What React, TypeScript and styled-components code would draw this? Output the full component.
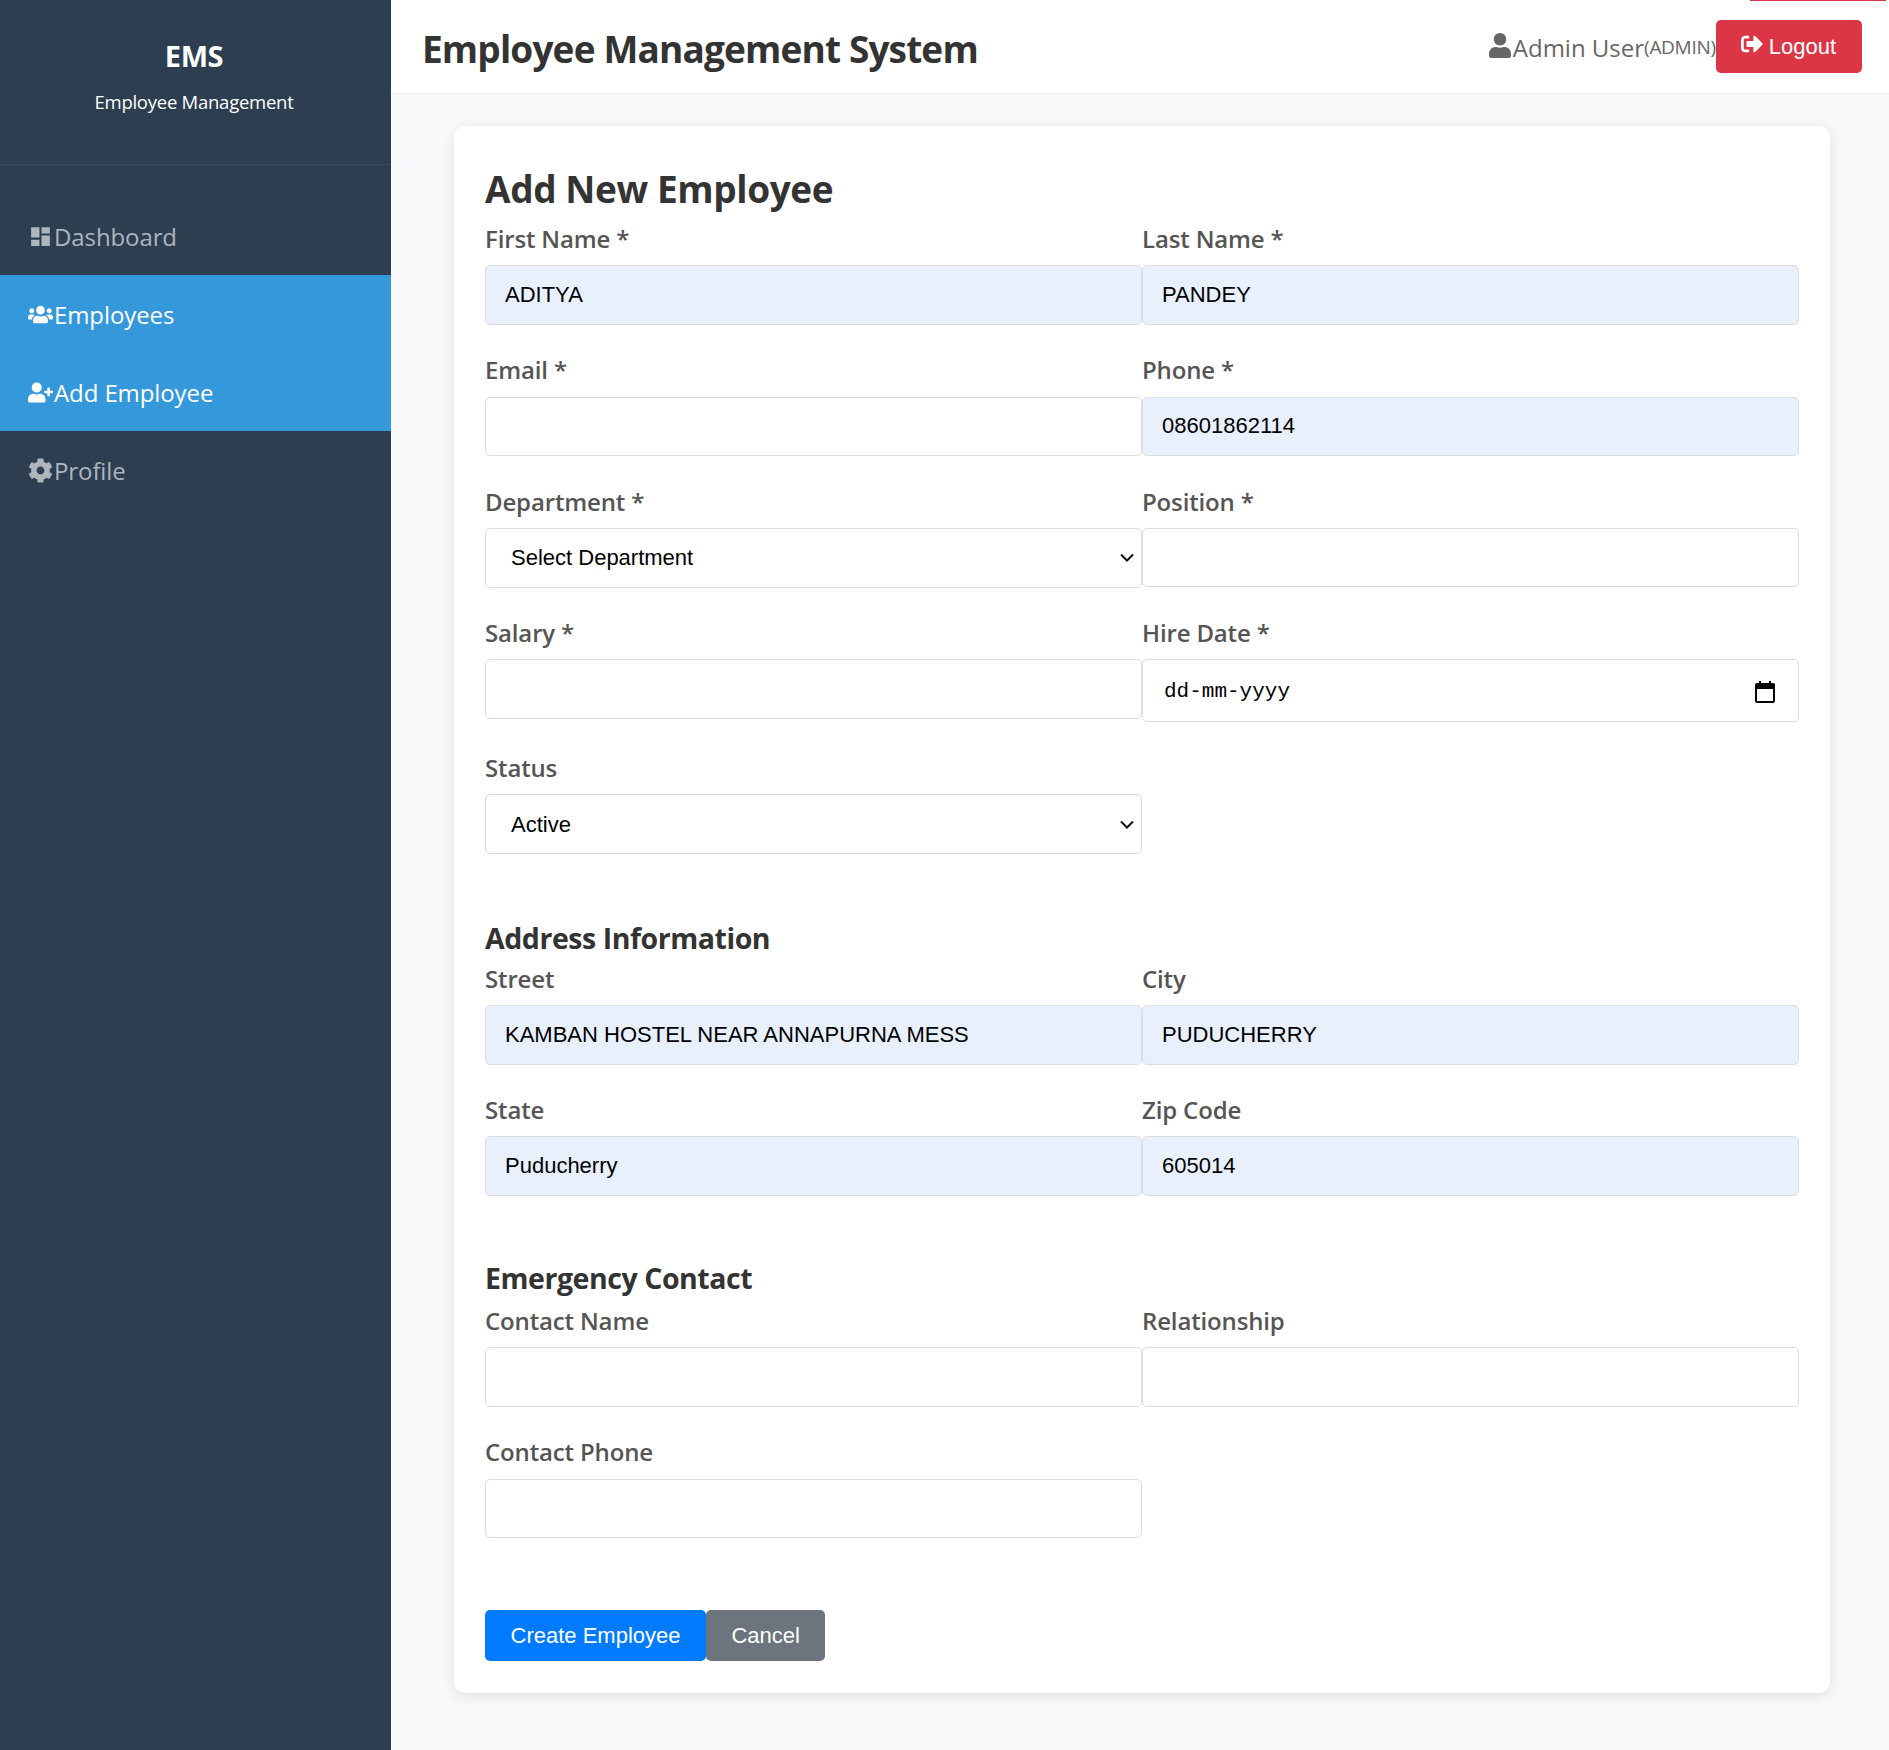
import styled, { createGlobalStyle } from 'styled-components';
import { FaCog, FaSignOutAlt, FaUser, FaUserPlus, FaUsers } from 'react-icons/fa';
import { MdDashboard } from 'react-icons/md';

const chevron =
  "data:image/svg+xml,%3Csvg xmlns='http://www.w3.org/2000/svg' width='14' height='9' viewBox='0 0 14 9'%3E%3Cpath d='M1 1.5l6 6 6-6' fill='none' stroke='%23111' stroke-width='2'/%3E%3C/svg%3E";

const GlobalStyle = createGlobalStyle`
  * {
    box-sizing: border-box;
  }
  body {
    margin: 0;
    background: #f8f9fa;
    font-family: 'Open Sans', 'Liberation Sans', sans-serif;
  }
`;

const Shell = styled.div`
  display: flex;
  min-height: 1750px;
`;

const Sidebar = styled.aside`
  width: 391px;
  flex-shrink: 0;
  background: #2c3e50;
  color: #fff;
`;

const Brand = styled.div`
  height: 165px;
  padding: 36px 3px 0 0;
  text-align: center;
  border-bottom: 1px solid #34495e;
`;

const BrandTitle = styled.h2`
  margin: 0;
  font-size: 29px;
  line-height: 40px;
  font-weight: 700;
  letter-spacing: -0.4px;
`;

const BrandSub = styled.p`
  margin: 11px 0 0;
  font-size: 18.5px;
  line-height: 30px;
  letter-spacing: -0.25px;
`;

const Nav = styled.nav`
  padding-top: 32px;
`;

const NavItem = styled.a<{ $active?: boolean }>`
  display: flex;
  align-items: center;
  gap: 1px;
  height: 78px;
  padding-left: 27px;
  font-size: 24px;
  letter-spacing: -0.1px;
  color: ${(p) => (p.$active ? '#fff' : '#adb5bd')};
  background: ${(p) => (p.$active ? '#3498db' : 'transparent')};
`;

const NavIcon = styled.span`
  display: flex;
  align-items: center;
  justify-content: center;
  width: 26px;
  font-size: 25px;
`;

const Main = styled.div`
  flex: 1;
  min-width: 0;
`;

const Header = styled.header`
  position: relative;
  display: flex;
  align-items: center;
  justify-content: space-between;
  height: 94px;
  padding: 0 27px 0 31px;
  background: #fff;
  border-bottom: 1px solid #e9ecef;

  &::after {
    content: '';
    position: absolute;
    top: 0;
    right: 3px;
    width: 136px;
    height: 1px;
    background: #dc3545;
  }
`;

const PageTitle = styled.h1`
  margin: 4px 0 0;
  font-size: 37px;
  font-weight: 700;
  color: #333;
  letter-spacing: -0.85px;
`;

const UserArea = styled.div`
  display: flex;
  align-items: center;
  color: #666;
`;

const UserName = styled.span`
  display: flex;
  align-items: center;
  font-size: 24px;
  letter-spacing: 0;
  gap: 1px;
  padding-top: 1px;
`;

const UserIcon = styled(FaUser)`
  width: 24px;
  height: 25px;
  margin-bottom: 3px;
`;

const UserRole = styled.span`
  font-size: 19px;
  letter-spacing: -0.3px;
`;

const LogoutButton = styled.button`
  display: flex;
  align-items: center;
  gap: 6px;
  height: 53px;
  padding: 0 26px 0 25px;
  border: none;
  border-radius: 5px;
  background: #dc3545;
  color: #fff;
  font-family: 'Liberation Sans', sans-serif;
  font-size: 22px;
`;

const LogoutIcon = styled(FaSignOutAlt)`
  width: 22px;
  height: 22px;
  margin-bottom: 5px;
`;

const Content = styled.main`
  padding: 32px 59px 57px 63px;
`;

const Card = styled.section`
  padding: 38px 31px 32px;
  background: #fff;
  border-radius: 11px;
  box-shadow: 0 3px 14px rgba(0, 0, 0, 0.1);
`;

const CardTitle = styled.h2`
  margin: 0 0 7px;
  font-size: 37px;
  line-height: 50px;
  font-weight: 700;
  color: #333;
  letter-spacing: -0.4px;
`;

const SectionTitle = styled.h3<{ $top: number; $bottom: number }>`
  margin: ${(p) => `${p.$top}px 0 ${p.$bottom}px`};
  font-size: 28.5px;
  line-height: 40px;
  font-weight: 700;
  color: #333;
  letter-spacing: -0.45px;
`;

const FormGrid = styled.div`
  display: grid;
  grid-template-columns: 1fr 1fr;
`;

const Field = styled.div`
  margin-bottom: 27.5px;
`;

const Label = styled.label`
  display: block;
  margin-bottom: 9.4px;
  font-size: 24px;
  line-height: 35px;
  font-weight: 550;
  color: #555;
  letter-spacing: -0.15px;
`;

const Input = styled.input<{ $filled?: boolean }>`
  display: block;
  width: 100%;
  height: 59.4px;
  padding: 0 19px;
  border: 1px solid #ddd;
  border-radius: 5px;
  background: ${(p) => (p.$filled ? '#e8f0fe' : '#fff')};
  font-family: 'Liberation Sans', sans-serif;
  font-size: 22px;
  color: #000;
`;

const Select = styled.select`
  display: block;
  width: 100%;
  height: 59.6px;
  padding: 0 25px;
  border: 1px solid #ddd;
  border-radius: 5px;
  appearance: none;
  background: #fff url("${chevron}") no-repeat right 7px center;
  font-family: 'Liberation Sans', sans-serif;
  font-size: 22px;
  color: #000;
`;

const DateBox = styled.div`
  display: flex;
  align-items: center;
  justify-content: space-between;
  height: 63px;
  padding: 2px 23px 0 21px;
  border: 1px solid #ddd;
  border-radius: 5px;
  font-family: 'Liberation Mono', monospace;
  font-size: 21px;
  color: #000;
`;

const Actions = styled.div`
  display: flex;
  margin-top: 44.5px;
`;

const ActionButton = styled.button<{ $color: string }>`
  height: 51px;
  padding: 0 25.5px;
  border: none;
  border-radius: 5px;
  background: ${(p) => p.$color};
  color: #fff;
  font-family: 'Liberation Sans', sans-serif;
  font-size: 22px;
`;

type FieldDef = { label: string; value?: string };

function TextField({ label, value }: FieldDef) {
  return (
    <Field>
      <Label>{label}</Label>
      <Input $filled={!!value} defaultValue={value} readOnly />
    </Field>
  );
}

function SelectField({ label, value }: { label: string; value: string }) {
  return (
    <Field>
      <Label>{label}</Label>
      <Select defaultValue={value}>
        <option>{value}</option>
      </Select>
    </Field>
  );
}

const navItems = [
  { label: 'Dashboard', icon: <MdDashboard /> },
  { label: 'Employees', icon: <FaUsers />, active: true },
  { label: 'Add Employee', icon: <FaUserPlus />, active: true },
  { label: 'Profile', icon: <FaCog /> },
];

export default function App() {
  return (
    <Shell>
      <GlobalStyle />
      <Sidebar>
        <Brand>
          <BrandTitle>EMS</BrandTitle>
          <BrandSub>Employee Management</BrandSub>
        </Brand>
        <Nav>
          {navItems.map((item) => (
            <NavItem key={item.label} $active={item.active}>
              <NavIcon>{item.icon}</NavIcon>
              {item.label}
            </NavItem>
          ))}
        </Nav>
      </Sidebar>
      <Main>
        <Header>
          <PageTitle>Employee Management System</PageTitle>
          <UserArea>
            <UserName>
              <UserIcon />
              Admin User
            </UserName>
            <UserRole>(ADMIN)</UserRole>
            <LogoutButton>
              <LogoutIcon />
              Logout
            </LogoutButton>
          </UserArea>
        </Header>
        <Content>
          <Card>
            <CardTitle>Add New Employee</CardTitle>
            <FormGrid>
              <TextField label="First Name *" value="ADITYA" />
              <TextField label="Last Name *" value="PANDEY" />
              <TextField label="Email *" />
              <TextField label="Phone *" value="08601862114" />
              <SelectField label="Department *" value="Select Department" />
              <TextField label="Position *" />
              <TextField label="Salary *" />
              <Field>
                <Label>Hire Date *</Label>
                <DateBox>
                  dd-mm-yyyy
                  <svg width="20" height="22" viewBox="0 0 20 22" fill="none">
                    <rect x="1" y="3" width="18" height="18" stroke="#000" strokeWidth="2" rx="1" />
                    <rect x="1" y="3" width="18" height="5" fill="#000" />
                    <rect x="4" y="0" width="2" height="4" fill="#000" />
                    <rect x="14" y="0" width="2" height="4" fill="#000" />
                  </svg>
                </DateBox>
              </Field>
              <SelectField label="Status" value="Active" />
            </FormGrid>
            <SectionTitle $top={36.2} $bottom={3.2}>Address Information</SectionTitle>
            <FormGrid>
              <TextField label="Street" value="KAMBAN HOSTEL NEAR ANNAPURNA MESS" />
              <TextField label="City" value="PUDUCHERRY" />
              <TextField label="State" value="Puducherry" />
              <TextField label="Zip Code" value="605014" />
            </FormGrid>
            <SectionTitle $top={35} $bottom={4.7}>Emergency Contact</SectionTitle>
            <FormGrid>
              <TextField label="Contact Name" />
              <TextField label="Relationship" />
              <TextField label="Contact Phone" />
            </FormGrid>
            <Actions>
              <ActionButton $color="#007bff">Create Employee</ActionButton>
              <ActionButton $color="#6c757d">Cancel</ActionButton>
            </Actions>
          </Card>
        </Content>
      </Main>
    </Shell>
  );
}
